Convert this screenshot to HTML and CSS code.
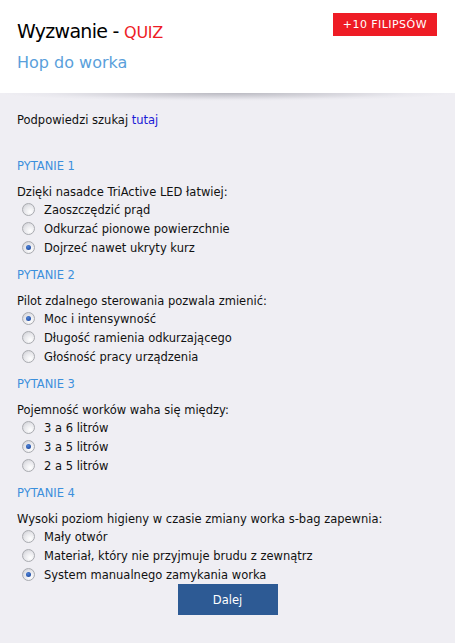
FILE: index.html
```html
<!DOCTYPE html>
<html lang="pl">
<head>
<meta charset="utf-8">
<title>Wyzwanie - QUIZ</title>
<link rel="stylesheet" href="styles.css">
</head>
<body>
<header class="header">
  <div class="header-text">
    <h1 class="title">Wyzwanie - <span class="quiz">QUIZ</span></h1>
    <h2 class="subtitle">Hop do worka</h2>
  </div>
  <div class="badge">+10 FILIPSÓW</div>
</header>
<div class="shadow"></div>
<main class="content">
  <p class="hint">Podpowiedzi szukaj <a href="#" class="link">tutaj</a></p>

  <section class="question">
    <h3 class="q-label">PYTANIE 1</h3>
    <p class="q-text">Dzięki nasadce TriActive LED łatwiej:</p>
    <ul class="options">
      <li class="option"><span class="radio"></span>Zaoszczędzić prąd</li>
      <li class="option"><span class="radio"></span>Odkurzać pionowe powierzchnie</li>
      <li class="option"><span class="radio checked"></span>Dojrzeć nawet ukryty kurz</li>
    </ul>
  </section>

  <section class="question">
    <h3 class="q-label">PYTANIE 2</h3>
    <p class="q-text">Pilot zdalnego sterowania pozwala zmienić:</p>
    <ul class="options">
      <li class="option"><span class="radio checked"></span>Moc i intensywność</li>
      <li class="option"><span class="radio"></span>Długość ramienia odkurzającego</li>
      <li class="option"><span class="radio"></span>Głośność pracy urządzenia</li>
    </ul>
  </section>

  <section class="question">
    <h3 class="q-label">PYTANIE 3</h3>
    <p class="q-text">Pojemność worków waha się między:</p>
    <ul class="options">
      <li class="option"><span class="radio"></span>3 a 6 litrów</li>
      <li class="option"><span class="radio checked"></span>3 a 5 litrów</li>
      <li class="option"><span class="radio"></span>2 a 5 litrów</li>
    </ul>
  </section>

  <section class="question">
    <h3 class="q-label">PYTANIE 4</h3>
    <p class="q-text">Wysoki poziom higieny w czasie zmiany worka s-bag zapewnia:</p>
    <ul class="options">
      <li class="option"><span class="radio"></span>Mały otwór</li>
      <li class="option"><span class="radio"></span>Materiał, który nie przyjmuje brudu z zewnątrz</li>
      <li class="option"><span class="radio checked"></span>System manualnego zamykania worka</li>
    </ul>
  </section>

  <div class="actions">
    <button class="next" type="button">Dalej</button>
  </div>
</main>
</body>
</html>
```

FILE: styles.css
```css
html, body {
  margin: 0;
  padding: 0;
}
body {
  background: #efeef3;
  font-family: "DejaVu Sans", Verdana, sans-serif;
  font-size: 11.5px;
  color: #111;
  width: 455px;
  min-height: 643px;
}
.header {
  background: #fff;
  height: 93px;
  box-sizing: border-box;
  padding: 19px 18px 0 17px;
  display: flex;
  justify-content: space-between;
  align-items: flex-start;
}
.title {
  margin: 0;
  font-family: "DejaVu Sans", sans-serif;
  font-weight: normal;
  font-size: 19px;
  line-height: 24px;
  color: #000;
  letter-spacing: -0.7px;
}
.quiz {
  color: #ee1c25;
  font-size: 16px;
  letter-spacing: -0.3px;
}
.subtitle {
  margin: 8px 0 0;
  font-family: "DejaVu Sans", sans-serif;
  font-weight: normal;
  font-size: 16px;
  line-height: 20px;
  color: #5a9fdb;
}
.badge {
  margin-top: -6px;
  background: #ee1c25;
  color: #fff;
  font-size: 11px;
  line-height: 23px;
  padding: 0 10px;
  letter-spacing: 0.45px;
}
.shadow {
  height: 8px;
  background: radial-gradient(ellipse 50% 100% at 50% 0%, rgba(150,150,160,0.6), rgba(200,200,210,0.15) 80%, rgba(230,230,235,0) 100%);
}
.content {
  padding: 11px 17px 0;
}
.hint {
  margin: 0 0 30px;
  line-height: 16px;
}
.link {
  color: #1a1ad6;
  text-decoration: none;
}
.question {
  margin-bottom: 10px;
}
.question:last-of-type {
  margin-bottom: 0;
}
.q-label {
  margin: 0 0 10px;
  font-weight: normal;
  font-size: 11.5px;
  line-height: 16px;
  color: #3c8fdc;
}
.q-text {
  margin: 0;
  line-height: 16px;
}
.options {
  list-style: none;
  margin: 0;
  padding: 0;
}
.option {
  display: flex;
  align-items: center;
  height: 19px;
  padding-left: 5px;
}
.radio {
  width: 11px;
  height: 11px;
  border-radius: 50%;
  border: 1px solid #a9abb0;
  background: radial-gradient(circle at 65% 70%, #ffffff 0%, #e6e6ea 55%, #c8c9ce 100%);
  margin-right: 9px;
  position: relative;
  flex: none;
}
.radio.checked::after {
  content: "";
  position: absolute;
  left: 3px;
  top: 3px;
  width: 5px;
  height: 5px;
  border-radius: 50%;
  background: radial-gradient(circle at 40% 35%, #4f84d8, #123a92);
}
.actions {
  display: flex;
  justify-content: center;
  margin-top: 0;
}
.next {
  width: 100px;
  height: 31px;
  border: 0;
  background: #2d5a94;
  color: #fff;
  font-family: "DejaVu Sans", Verdana, sans-serif;
  font-size: 11.5px;
  padding: 0;
}
```
